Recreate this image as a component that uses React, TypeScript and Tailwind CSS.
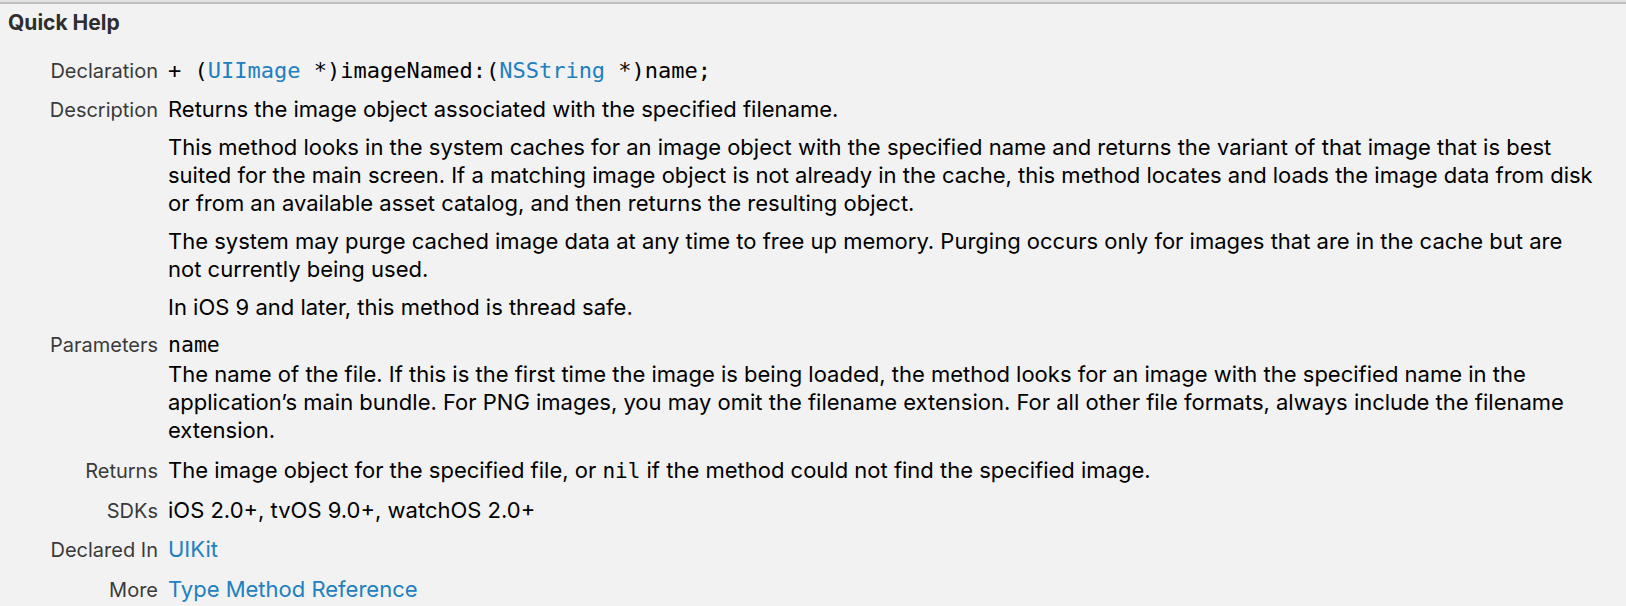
import React from 'react'

/**
 * Xcode-style Quick Help inspector panel
 */

const sans = "font-['Inter','Noto_Sans',sans-serif]"
const mono = "font-['DejaVu_Sans_Mono','Liberation_Mono',monospace]"

interface RowProps {
  label: string
  className?: string
  children: React.ReactNode
}

function Row({ label, className = '', children }: RowProps) {
  return (
    <div className={`flex items-baseline ${className}`}>
      <div className="w-[158px] shrink-0 text-right text-[20px] text-[#3a3a3a]">{label}</div>
      <div className="ml-[10px] flex-1 whitespace-nowrap text-[22px] text-black">{children}</div>
    </div>
  )
}

const link = 'text-[#2080c0]'

export default function App() {
  return (
    <div className={`h-[606px] w-[1626px] overflow-hidden bg-[#f2f2f2] leading-[28px] ${sans}`}>
      {/* top divider */}
      <div className="h-[2px] bg-[#e2e2e2]" />
      <div className="h-[2px] bg-[#bfbfbf]" />

      <h2 className="mt-[5px] pl-[8px] text-[21px] font-bold text-[#2e2e2e]">Quick Help</h2>

      <div className="mt-[19px]">
        <Row label="Declaration">
          <span className={`${mono} text-[22px]`}>
            + (<span className={link}>UIImage</span> *)imageNamed:(<span className={link}>NSString</span> *)name;
          </span>
        </Row>

        <Row label="Description" className="mt-[10px]">
          <p>Returns the image object associated with the specified filename.</p>
          <p className="mt-[10px]">
            This method looks in the system caches for an image object with the specified name and returns the variant of that image that is best
            <br />
            suited for the main screen. If a matching image object is not already in the cache, this method locates and loads the image data from disk
            <br />
            or from an available asset catalog, and then returns the resulting object.
          </p>
          <p className="mt-[10px]">
            The system may purge cached image data at any time to free up memory. Purging occurs only for images that are in the cache but are
            <br />
            not currently being used.
          </p>
          <p className="mt-[10px]">In iOS 9 and later, this method is thread safe.</p>
        </Row>

        <Row label="Parameters" className="mt-[10px]">
          <p className={`${mono} text-[21.5px]`}>name</p>
          <p className="mt-[1px]">
            The name of the file. If this is the first time the image is being loaded, the method looks for an image with the specified name in the
            <br />
            application’s main bundle. For PNG images, you may omit the filename extension. For all other file formats, always include the filename
            <br />
            extension.
          </p>
        </Row>

        <Row label="Returns" className="mt-[12px]">
          The image object for the specified file, or <span className={`${mono} text-[21px]`}>nil</span> if the method could not find the specified image.
        </Row>

        <Row label="SDKs" className="mt-[11px]">
          iOS 2.0+, tvOS 9.0+, watchOS 2.0+
        </Row>

        <Row label="Declared In" className="mt-[10px]">
          <span className={link}>UIKit</span>
        </Row>

        <Row label="More" className="mt-[11px]">
          <span className={link}>Type Method Reference</span>
        </Row>
      </div>
    </div>
  )
}
